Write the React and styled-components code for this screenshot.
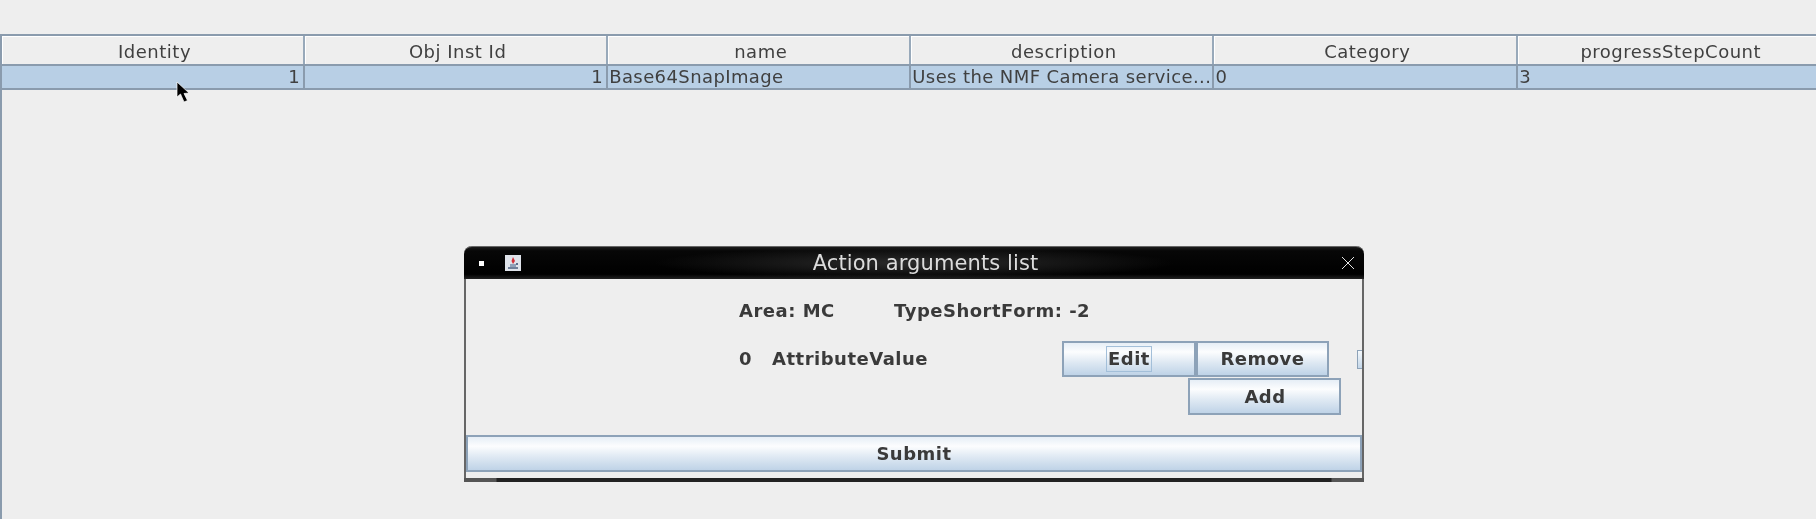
import React from "react";
import styled, { createGlobalStyle } from "styled-components";

const columns = ["Identity", "Obj Inst Id", "name", "description", "Category", "progressStepCount"];
const row = [
  { text: "1", right: true },
  { text: "1", right: true },
  { text: "Base64SnapImage" },
  { text: "Uses the NMF Camera service..." },
  { text: "0" },
  { text: "3" },
];

const App = () => {
  return (
    <Page>
      <GlobalStyle />
      <Table>
        <HeaderRow>
          {columns.map((c) => (
            <HeaderCell key={c}>{c}</HeaderCell>
          ))}
        </HeaderRow>
        <DataRow>
          {row.map((c, i) => (
            <DataCell key={i} $right={c.right}>
              {c.text}
            </DataCell>
          ))}
        </DataRow>
      </Table>
      <Cursor viewBox="0 0 16 24">
        <path d="M1 1 L1 16 L4.5 13 L8 21 L11.5 19.5 L8 12.5 L13 12 Z" fill="#000" stroke="#fff" strokeWidth="0.7" />
      </Cursor>
      <Dialog>
        <TitleBar>
          <MenuDot />
          <JavaIcon viewBox="0 0 16 16">
            <rect width="16" height="16" fill="#dfe3ea" />
            <path d="M3 12 H13 V14 H3 Z" fill="#6f7f9a" />
            <path d="M5 9 H11 V12 H5 Z" fill="#8fa0b8" />
            <path d="M8 2 L10 6 L8 9 L6.5 6 Z" fill="#d2303a" />
            <path d="M11 8 h2 v2 h-2 Z" fill="#5a6c8c" />
          </JavaIcon>
          <Title>Action arguments list</Title>
          <CloseIcon viewBox="0 0 14 14">
            <path d="M1 1 L13 13 M13 1 L1 13" stroke="#e4e4e4" strokeWidth="1" fill="none" />
          </CloseIcon>
        </TitleBar>
        <Content>
          <InfoRow>
            <AreaLabel>Area: MC</AreaLabel>
            <Label>TypeShortForm: -2</Label>
          </InfoRow>
          <ArgRow>
            <IndexLabel>0</IndexLabel>
            <NameLabel>AttributeValue</NameLabel>
            <EditButton>
              <Focus>Edit</Focus>
            </EditButton>
            <RemoveButton>Remove</RemoveButton>
            <Sliver />
          </ArgRow>
          <AddRow>
            <AddButton>Add</AddButton>
          </AddRow>
          <SubmitButton>Submit</SubmitButton>
        </Content>
        <BottomEdge />
      </Dialog>
    </Page>
  );
};

export default App;

const columnWidths = "repeat(4, 303.1px) 303.8px 303.1px";

const GlobalStyle = createGlobalStyle`
  html, body {
    margin: 0;
    padding: 0;
    background: #eeeeee;
    overflow: hidden;
  }
`;

const Page = styled.div`
  position: relative;
  width: 1816px;
  height: 519px;
  padding-top: 34px;
  box-sizing: border-box;
  background: #eeeeee;
  font-family: "DejaVu Sans", sans-serif;
  color: #404040;
  filter: blur(0.35px);
`;

const Table = styled.div`
  border-top: 2px solid #8a9bad;
  border-left: 2px solid #8a9bad;
  height: 485px;
  box-sizing: border-box;
`;

const HeaderRow = styled.div`
  display: grid;
  grid-template-columns: ${columnWidths};
  height: 28px;
  border-bottom: 2px solid #8a9bad;
`;

const HeaderCell = styled.div`
  display: flex;
  align-items: center;
  justify-content: center;
  padding: 2px 0 0 4px;
  font-size: 18px;
  letter-spacing: 0.5px;
  border-right: 2px solid #98a9ba;
  box-shadow: inset 1px 1px 0 #fff;
  box-sizing: border-box;
`;

const DataRow = styled.div`
  display: grid;
  grid-template-columns: ${columnWidths};
  height: 22px;
  background: #b8cfe5;
  border-bottom: 2px solid #8a9bad;
`;

const DataCell = styled.div`
  font-size: 18px;
  letter-spacing: 0.4px;
  line-height: 22px;
  padding: 0 3px 0 1px;
  white-space: nowrap;
  overflow: hidden;
  text-align: ${(p) => (p.$right ? "right" : "left")};
  border-right: 2px solid #8a9bad;
  box-sizing: border-box;
`;

const Cursor = styled.svg`
  position: absolute;
  left: 176px;
  top: 81px;
  width: 16px;
  height: 24px;
`;

const Dialog = styled.div`
  position: absolute;
  left: 464px;
  top: 246px;
  width: 900px;
  height: 236px;
  box-sizing: border-box;
  display: flex;
  flex-direction: column;
  border-left: 2px solid #666;
  border-right: 2px solid #666;
  border-radius: 8px 8px 0 0;
  background: #eeeeee;
`;

const TitleBar = styled.div`
  position: relative;
  height: 33px;
  flex: none;
  margin: 0 -2px;
  display: flex;
  align-items: center;
  padding: 0 9px 0 15px;
  border-radius: 8px 8px 0 0;
  border-top: 1px solid #666;
  box-sizing: border-box;
  background:
    radial-gradient(ellipse 260px 16px at 50% 50%, #2c2c2c, rgba(0, 0, 0, 0) 100%),
    linear-gradient(180deg, #1c1c1c 0, #070707 12%, #000 85%, #222 100%);
`;

const MenuDot = styled.span`
  width: 5px;
  height: 5px;
  background: #fff;
  margin-right: 21px;
`;

const JavaIcon = styled.svg`
  width: 16px;
  height: 16px;
`;

const Title = styled.div`
  flex: 1;
  text-align: center;
  color: #dcdcdc;
  font-size: 21px;
  letter-spacing: 0.1px;
  padding-right: 11px;
`;

const CloseIcon = styled.svg`
  width: 14px;
  height: 14px;
`;

const Content = styled.div`
  flex: 1;
  display: flex;
  flex-direction: column;
`;

const Label = styled.span`
  font-size: 18px;
  font-weight: bold;
  letter-spacing: 0.5px;
  color: #3a3a3a;
  white-space: nowrap;
`;

const InfoRow = styled.div`
  display: flex;
  align-items: center;
  height: 62px;
  padding-top: 1px;
  box-sizing: border-box;
  padding-left: 273px;
`;

const AreaLabel = styled(Label)`
  width: 155px;
`;

const ArgRow = styled.div`
  display: flex;
  align-items: stretch;
  height: 36px;
  padding-left: 273px;
`;

const IndexLabel = styled(Label)`
  width: 33px;
  line-height: 36px;
`;

const NameLabel = styled(Label)`
  width: 290px;
  line-height: 36px;
`;

const Button = styled.div`
  display: flex;
  align-items: center;
  justify-content: center;
  box-sizing: border-box;
  font-size: 18px;
  font-weight: bold;
  letter-spacing: 0.5px;
  color: #3a3a3a;
  border: 2px solid #8da2b8;
  background: linear-gradient(180deg, #e6eef6 0, #fcfdfe 28%, #dfe9f3 60%, #bfd3e7 100%);
`;

const EditButton = styled(Button)`
  width: 134px;
`;

const RemoveButton = styled(Button)`
  width: 133px;
  padding-bottom: 1px;
`;

const Focus = styled.span`
  border: 1px solid #a3bfd9;
  padding: 0 1px;
  line-height: 24px;
`;

const Sliver = styled.div`
  align-self: center;
  width: 5px;
  height: 19px;
  margin-left: auto;
  border: 1px solid #8da2b8;
  border-right: 0;
  box-sizing: border-box;
  background: linear-gradient(180deg, #f4f8fb, #c4d7e9);
`;

const AddRow = styled.div`
  display: flex;
  height: 37px;
  margin-top: 1px;
  padding-left: 722px;
`;

const AddButton = styled(Button)`
  width: 153px;
  padding-left: 1px;
`;

const SubmitButton = styled(Button)`
  height: 37px;
  margin-top: 20px;
  flex: none;
`;

const BottomEdge = styled.div`
  height: 4px;
  margin: auto -2px 0;
  flex: none;
  background: linear-gradient(90deg, #555 0, #555 32px, #222 33px, #222 calc(100% - 33px), #555 calc(100% - 32px));
`;
